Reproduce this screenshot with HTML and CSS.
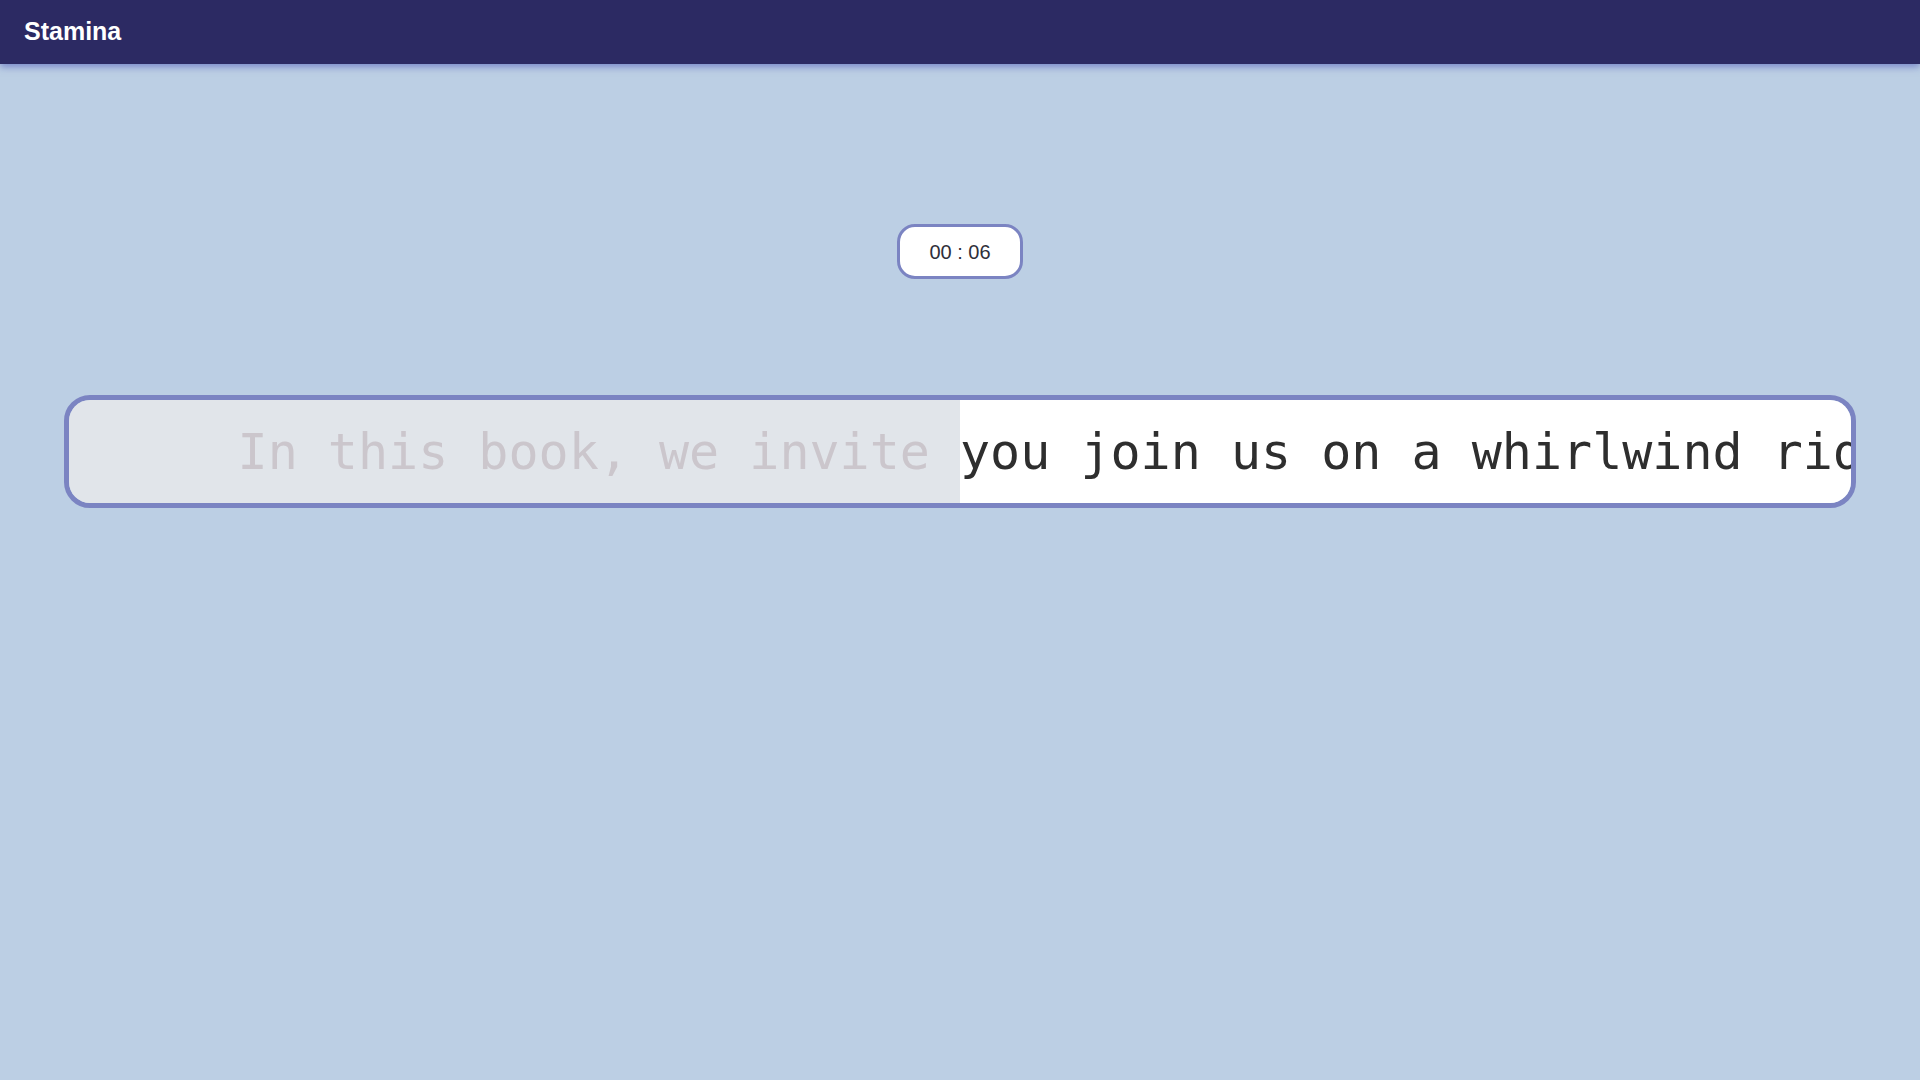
FILE: index.html
```html
<!DOCTYPE html>
<html lang="en">
<head>
<meta charset="utf-8">
<title>Stamina</title>
<link rel="stylesheet" href="styles.css">
</head>
<body>
<header class="topbar">
  <span class="brand">Stamina</span>
</header>
<main class="main">
  <div class="timer"><span class="timer-text">00 : 06</span></div>
  <div class="typer">
    <div class="typed"><span>In this book, we invite </span></div>
    <div class="pending"><span>you join us on a whirlwind ride through the world of programming</span></div>
  </div>
</main>
</body>
</html>
```
FILE: styles.css
```css
html, body {
  margin: 0;
  padding: 0;
  height: 100%;
}
body {
  background: #bccfe4;
  font-family: "Liberation Sans", Arial, sans-serif;
}
.topbar {
  height: 64px;
  background: #2c2a63;
  display: flex;
  align-items: center;
  padding: 0 24px;
  box-shadow: 0 3px 7px rgba(70, 80, 180, 0.55);
  box-sizing: border-box;
  position: relative;
  z-index: 1;
}
.brand {
  color: #ffffff;
  font-weight: bold;
  font-size: 25px;
  margin-top: -1px;
}
.main {
  display: flex;
  flex-direction: column;
  align-items: center;
  padding: 160px 64px 0;
}
.timer {
  width: 126px;
  height: 55px;
  box-sizing: border-box;
  border: 3px solid #7b84c2;
  border-radius: 18px;
  background: #ffffff;
  color: #2f2f3a;
  font-size: 20px;
  display: flex;
  align-items: center;
  justify-content: center;
}
.timer-text {
  margin-top: 2px;
}
.typer {
  margin-top: 116px;
  width: 100%;
  height: 113px;
  box-sizing: border-box;
  border: 5px solid #7b84c2;
  border-radius: 26px;
  overflow: hidden;
  display: flex;
  font-family: "DejaVu Sans Mono", monospace;
  font-size: 50px;
  white-space: pre;
}
.typed, .pending {
  flex: 1 1 0;
  min-width: 0;
  overflow: hidden;
  display: flex;
  align-items: center;
}
.typed {
  background: #e1e5ea;
  color: #cbc6cc;
  justify-content: flex-end;
}
.pending {
  background: #ffffff;
  color: #2e2e2e;
  justify-content: flex-start;
}
```
